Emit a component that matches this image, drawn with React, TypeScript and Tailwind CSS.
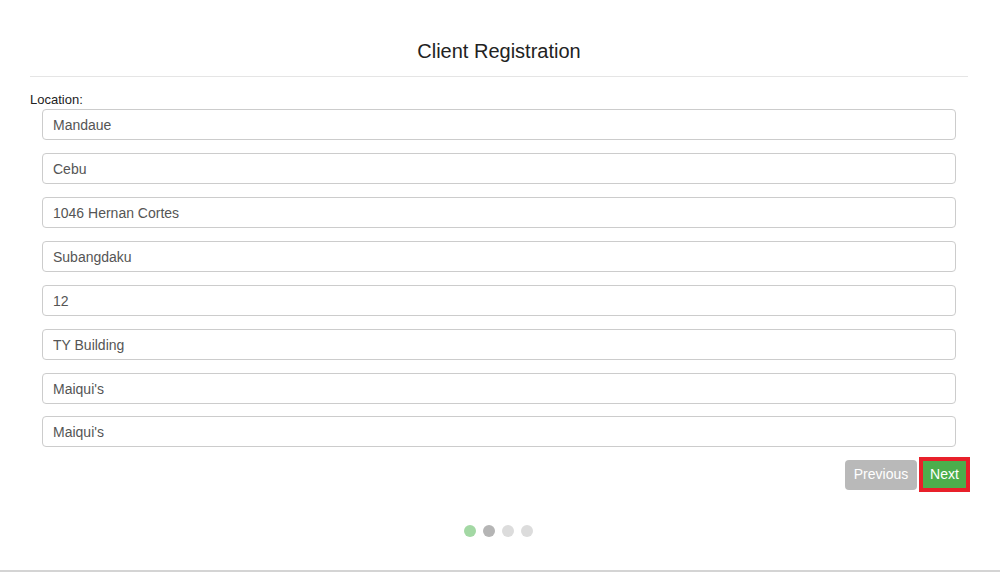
const fields = [
  "Mandaue",
  "Cebu",
  "1046 Hernan Cortes",
  "Subangdaku",
  "12",
  "TY Building",
  "Maiqui's",
  "Maiqui's",
];

const dots = ["bg-[#a3d8a4]", "bg-[#b5b5b5]", "bg-[#dcdcdc]", "bg-[#dcdcdc]"];

export default function App() {
  return (
    <div className="w-full h-[572px] bg-white border-b-2 border-[#d4d4d4] font-['Liberation_Sans',Arial,sans-serif] text-[#333]">
      <div className="px-[30px]">
        <h1 className="pt-[40px] pb-[14px] text-center text-[20px] leading-[22px] text-[#222] border-b border-[#e5e5e5] mr-[2px]">
          Client Registration
        </h1>
        <label className="block mt-[15px] text-[13px] leading-[15px] text-[#222]">Location:</label>
        <div className="pl-[12px] pr-[14px] mt-[2px]">
          {fields.map((v, i) => (
            <input
              key={i}
              defaultValue={v}
              className={`block w-full h-[31px] px-[10px] text-[14px] text-[#555] border border-[#ccc] rounded-[4px] outline-none ${
                i === 6 ? "mb-[12px]" : i === 7 ? "mb-[10px]" : "mb-[13px]"
              }`}
            />
          ))}
        </div>
        <div className="flex justify-end items-center gap-[2px]">
          <button className="w-[72px] h-[30px] rounded-[4px] bg-[#b9b9b9] text-white text-[14px]">Previous</button>
          <div className="border-4 border-[#e8202a]">
            <button className="w-[43px] h-[27px] bg-[#4cae4c] text-white text-[14px]">Next</button>
          </div>
        </div>
        <div className="flex justify-center gap-[7px] mt-[33px] pr-[3px]">
          {dots.map((c, i) => (
            <span key={i} className={`w-[12px] h-[12px] rounded-full ${c}`} />
          ))}
        </div>
      </div>
    </div>
  );
}
